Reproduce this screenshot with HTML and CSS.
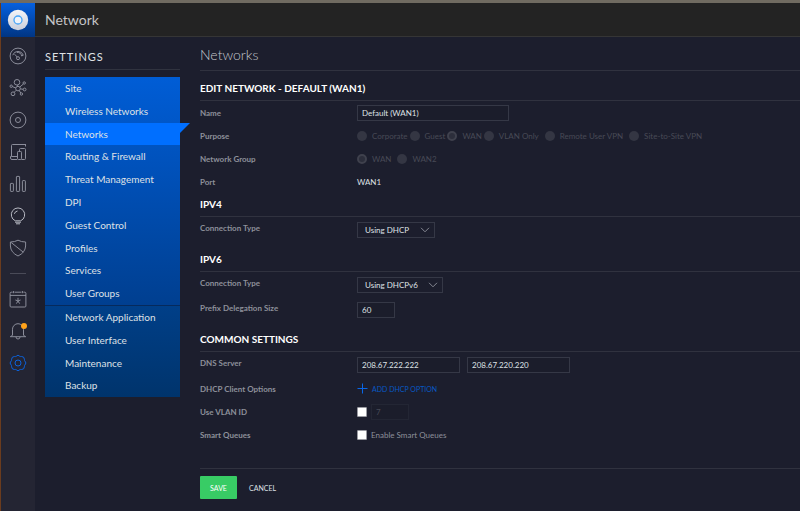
FILE: index.html
```html
<!DOCTYPE html>
<html lang="en">
<head>
<meta charset="utf-8">
<title>Network</title>
<link rel="stylesheet" href="styles.css">
</head>
<body>
<div class="app">
  <nav class="rail" aria-label="Main">
    <a class="logo" href="#" aria-label="Home">
      <svg width="22" height="22" viewBox="0 0 22 22"><defs><linearGradient id="disc" x1="0" y1="0" x2="0" y2="1"><stop offset="0" stop-color="#f4f5f8"/><stop offset="1" stop-color="#c9cedb"/></linearGradient></defs><circle cx="11" cy="11" r="10.2" fill="url(#disc)"/><circle cx="11" cy="11" r="4" fill="#eef3fb" stroke="#48a4f5" stroke-width="1.3"/></svg>
    </a>
    <div class="icons">
      <a href="#" aria-label="Dashboard"><svg viewBox="0 0 18 18"><circle cx="9" cy="9" r="7.9"/><path d="M3.7 8.2A5.6 5.6 0 0 1 14.3 8.2L12.6 9A4 4 0 0 0 8 5.4M5.6 7.2L8.2 10"/><circle cx="9" cy="11.2" r="1.5"/></svg></a>
      <a href="#" aria-label="Topology"><svg viewBox="0 0 18 18"><circle cx="9" cy="9.6" r="2.3"/><circle cx="8" cy="3.3" r="2.8"/><circle cx="4" cy="14.8" r="1.9"/><circle cx="2.2" cy="7.2" r="1.2"/><circle cx="15.2" cy="4" r="1.2"/><circle cx="15.6" cy="10.5" r="1.4"/><circle cx="12.4" cy="15" r="1.2"/><path d="M8.5 6.2L8.7 7.3M3.3 7.6L6.8 9M10.8 8L14.4 5M11.3 9.8L14.2 10.3M7.3 11.2L5.2 13.3M10.2 11.6L11.8 14"/></svg></a>
      <a href="#" aria-label="Devices"><svg viewBox="0 0 18 18"><circle cx="9" cy="9" r="7.9"/><circle cx="9" cy="9" r="2.5"/></svg></a>
      <a href="#" aria-label="Clients"><svg viewBox="0 0 18 18"><path d="M17 1.5H3.5a1 1 0 0 0-1 1V13.5H1.5v1.5a1.5 1.5 0 0 0 1.5 1.5H8M16.5 1.5V3.5M2.5 13.5H8"/><rect x="8.5" y="8.5" width="4" height="8" rx=".8"/><path d="M10.5 8.3V6.5a1 1 0 0 1 1-1h4a1 1 0 0 1 1 1v9a1 1 0 0 1-1 1H12.5"/></svg></a>
      <a href="#" aria-label="Statistics"><svg viewBox="0 0 18 18"><rect x="1.4" y="8.4" width="3" height="8" rx=".6"/><rect x="7.4" y="1.4" width="3.2" height="15" rx=".6"/><rect x="13.4" y="5.6" width="3" height="10.8" rx=".6"/></svg></a>
      <a class="bright" href="#" aria-label="Insights"><svg viewBox="0 0 18 18"><path d="M6.3 13.8A6.7 6.7 0 1 1 11.7 13.8Z"/><path d="M6 15.2H12M7 16.8H11M5.4 6.8A3.8 3.8 0 0 1 8.5 4"/></svg></a>
      <a href="#" aria-label="Security"><svg viewBox="0 0 18 18"><path d="M9 1.2Q5.8 3 1.4 3V7Q1.7 13.5 9 17Q16.3 13.5 16.6 7V3Q12.2 3 9 1.2ZM2.2 3.5L14.4 13.3"/></svg></a>
      <hr>
      <a href="#" aria-label="Events"><svg viewBox="0 0 18 18"><path d="M3.6 2.2H2.2a1.1 1.1 0 0 0-1.1 1.1V16a1 1 0 0 0 1 1h13.8a1 1 0 0 0 1-1V3.3a1.1 1.1 0 0 0-1.1-1.1h-1.4M5.6 2.2H12.4M1 5.4H17M4.6 1V3.2M13.4 1V3.2"/><path d="M9 7.8V10.7M6.4 10L9 10.9L11.6 10M7.4 13.6L9 11L10.6 13.6"/></svg></a>
      <a class="bell" href="#" aria-label="Alerts"><svg viewBox="0 0 18 18"><path d="M3.5 13V7.2A5.5 5.5 0 0 1 14.5 7.2V13Q14.8 14 16.7 14.7H1.3Q3.2 14 3.5 13ZM7 15A2 2 0 0 0 11 15"/></svg><span class="badge"></span></a>
      <a class="current" href="#" aria-label="Settings"><svg viewBox="0 0 18 18"><path d="M7.2 2.3Q9 0 10.8 2.3Q11.2 2.7 12.5 2.5Q15.2 2.4 15.4 5.2Q15.3 6.6 15.9 7Q18 9 15.9 11Q15.3 11.4 15.4 12.8Q15.2 15.6 12.5 15.5Q11.2 15.3 10.8 15.7Q9 18 7.2 15.7Q6.8 15.3 5.5 15.5Q2.8 15.6 2.6 12.8Q2.7 11.4 2.1 11Q0 9 2.1 7Q2.7 6.6 2.6 5.2Q2.8 2.4 5.5 2.5Q6.8 2.7 7.2 2.3Z"/><circle cx="9" cy="9" r="3"/></svg></a>
    </div>
  </nav>
  <div class="page">
    <header class="topbar">Network</header>
    <div class="columns">
      <aside class="settings">
        <h2>SETTINGS</h2>
        <ul class="menu">
          <li><a href="#">Site</a></li>
          <li><a href="#">Wireless Networks</a></li>
          <li class="active"><a href="#">Networks</a></li>
          <li><a href="#">Routing &amp; Firewall</a></li>
          <li><a href="#">Threat Management</a></li>
          <li><a href="#">DPI</a></li>
          <li><a href="#">Guest Control</a></li>
          <li><a href="#">Profiles</a></li>
          <li><a href="#">Services</a></li>
          <li><a href="#">User Groups</a></li>
        </ul>
        <ul class="menu lower">
          <li><a href="#">Network Application</a></li>
          <li><a href="#">User Interface</a></li>
          <li><a href="#">Maintenance</a></li>
          <li><a href="#">Backup</a></li>
        </ul>
      </aside>
      <main class="content">
        <h1>Networks</h1>
        <form>
          <section>
            <h3>EDIT NETWORK - DEFAULT (WAN1)</h3>
            <div class="row"><label for="name">Name</label><input class="text wide" id="name" type="text" value="Default (WAN1)"></div>
            <div class="row" role="radiogroup" aria-labelledby="purpose"><span class="label" id="purpose">Purpose</span>
              <div class="radios">
                <label><input type="radio" name="purpose" disabled>Corporate</label>
                <label><input type="radio" name="purpose" disabled>Guest</label>
                <label><input type="radio" name="purpose" disabled checked>WAN</label>
                <label class="roomy"><input type="radio" name="purpose" disabled>VLAN Only</label>
                <label class="roomy"><input type="radio" name="purpose" disabled>Remote User VPN</label>
                <label><input type="radio" name="purpose" disabled>Site-to-Site VPN</label>
              </div></div>
            <div class="row" role="radiogroup" aria-labelledby="group"><span class="label" id="group">Network Group</span>
              <div class="radios">
                <label class="roomy"><input type="radio" name="group" disabled checked>WAN</label>
                <label><input type="radio" name="group" disabled>WAN2</label>
              </div></div>
            <div class="row"><span class="label">Port</span><span class="value">WAN1</span></div>
          </section>
          <section>
            <h3>IPV4</h3>
            <div class="row tall"><label for="v4">Connection Type</label>
              <div class="pick short"><select id="v4"><option>Using DHCP</option></select><svg viewBox="0 0 10 6"><path d="M1 .8L5 4.8L9 .8"/></svg></div></div>
          </section>
          <section class="spaced">
            <h3>IPV6</h3>
            <div class="row tall"><label for="v6">Connection Type</label>
              <div class="pick"><select id="v6"><option>Using DHCPv6</option></select><svg viewBox="0 0 10 6"><path d="M1 .8L5 4.8L9 .8"/></svg></div></div>
            <div class="row tall"><label for="prefix">Prefix Delegation Size</label><input class="text small" id="prefix" type="text" value="60"></div>
          </section>
          <section class="spaced">
            <h3>COMMON SETTINGS</h3>
            <div class="row tall"><label for="dns1">DNS Server</label>
              <div class="pair"><input class="text" id="dns1" type="text" value="208.67.222.222"><input class="text" aria-label="Second DNS server" type="text" value="208.67.220.220"></div></div>
            <div class="row"><span class="label">DHCP Client Options</span>
              <button class="add" type="button"><svg viewBox="0 0 11 11"><path d="M5.5 .5V10.5M.5 5.5H10.5"/></svg>ADD DHCP OPTION</button></div>
            <div class="row"><label for="vlan">Use VLAN ID</label>
              <div class="check"><input id="vlan" type="checkbox"><input class="text small" aria-label="VLAN ID" type="text" value="7" disabled></div></div>
            <div class="row"><span class="label">Smart Queues</span>
              <label class="check"><input type="checkbox">Enable Smart Queues</label></div>
          </section>
          <footer class="actions"><button class="save" type="submit">SAVE</button><button class="cancel" type="button">CANCEL</button></footer>
        </form>
      </main>
    </div>
  </div>
</div>
</body>
</html>
```
FILE: styles.css
```css
* { box-sizing: border-box; }
body {
  margin: 0;
  min-height: 100vh;
  border-top: 3px solid #706b61;
  background: #1c1e2d;
  color: #dfe1e6;
  font: 8px/12px Lato, "Liberation Sans", sans-serif;
}
a { color: inherit; text-decoration: none; }
input, select, button { font: inherit; color: inherit; margin: 0; }
button { border: 0; background: none; padding: 0; }
h1, h2, h3, ul { margin: 0; padding: 0; }

.app {
  display: flex;
  min-height: calc(100vh - 3px);
  border-left: 1px solid #6b3c1e;
}

.rail { flex: none; width: 34px; background: #242533; }
.logo {
  display: grid;
  place-items: center;
  height: 34px;
  background: linear-gradient(#0560df, #003583);
}
.icons { display: grid; justify-items: center; padding-top: 10px; gap: 14px; }
.icons a { position: relative; height: 18px; color: #8b8d9a; }
.icons svg {
  display: block;
  width: 18px;
  height: 18px;
  fill: none;
  stroke: currentColor;
  stroke-linejoin: round;
}
.icons .bright { color: #b6b8c2; }
.icons .current { color: #0b62dc; }
.icons hr { width: 16px; height: 1px; margin: 2px 0; border: 0; background: #4a4b58; }
.badge {
  position: absolute;
  top: 1px;
  right: 0;
  width: 6px;
  height: 6px;
  border-radius: 50%;
  background: #ffa21a;
}

.page { flex: 1; min-width: 0; }
.topbar {
  height: 34px;
  padding-left: 10px;
  border-bottom: 1px solid #353535;
  background: #232323;
  color: #c3c4c6;
  font-size: 14px;
  line-height: 33px;
}
.columns { display: flex; gap: 20px; padding-left: 10px; }

.settings { flex: none; width: 135px; }
.settings h2 {
  margin-bottom: 7px;
  padding: 12px 0 5px;
  border-bottom: 1px solid #30333f;
  font-size: 11px;
  font-weight: 400;
  line-height: 15px;
  letter-spacing: 1px;
}
.menu {
  display: grid;
  grid-auto-rows: 23px 23px 22px 23px 23px;
  background: linear-gradient(#005dd6, #003f90);
  list-style: none;
  font-size: 10px;
  line-height: 22px;
}
.menu a { display: block; padding-left: 20px; }
.menu .active { position: relative; background: #006fff; }
.menu .active::after {
  content: "";
  position: absolute;
  top: 0;
  left: 100%;
  border-top: 10px solid #006fff;
  border-right: 10px solid transparent;
}
.lower { border-top: 1px solid #062a5c; background: linear-gradient(#003f88, #00346c); }

.content { flex: 1; min-width: 0; }
h1 {
  padding: 8px 0 6px;
  border-bottom: 1px solid #30323f;
  color: #c5c7cd;
  font-size: 14px;
  font-weight: 300;
  line-height: 19px;
}
h3 {
  padding: 5px 0;
  border-bottom: 1px solid #30323f;
  color: #fff;
  font-size: 10px;
  font-weight: 700;
  line-height: 13px;
}
form > section:first-child { padding-top: 6px; }
.row {
  display: grid;
  grid-template-columns: 157px 1fr;
  align-items: center;
  height: 23px;
}
.row.tall { height: 25px; }
.row > label:first-child, .label { color: #8d909a; font-weight: 700; }
.tall > label:first-child { padding-bottom: 3px; }
.text {
  width: 103px;
  height: 16px;
  padding: 0 4px;
  border: 1px solid #353846;
  background: #1b1d2b;
}
.text.wide { width: 152px; }
.text.small { width: 38px; }
.text:disabled { border-color: #232634; color: #484a56; }

.radios { display: flex; gap: 2px; color: #484a56; }
.radios label { display: flex; align-items: center; gap: 5px; }
.radios .roomy { margin-right: 4px; }
.radios input {
  appearance: none;
  width: 10px;
  height: 10px;
  border-radius: 50%;
  background: #343643;
}
.radios input:checked { border: 2px solid #3f414d; background: #2c2e3b; }

.spaced { padding-top: 6px; }
.pick { display: grid; width: 86px; align-items: center; }
.pick.short { width: 78px; }
.pick select, .pick svg { grid-area: 1 / 1; }
.pick select {
  appearance: none;
  height: 16px;
  padding: 0 7px;
  border: 1px solid #353846;
  border-radius: 0;
  background: transparent;
}
.pick svg {
  justify-self: end;
  width: 10px;
  margin-right: 5px;
  fill: none;
  stroke: #858792;
  pointer-events: none;
}
.pair { display: flex; gap: 7px; }
.add { display: flex; align-items: center; gap: 4px; color: #0858c4; font-size: 7px; }
.add svg { width: 11px; fill: none; stroke: #0866e8; }
.check { display: flex; align-items: center; gap: 4px; color: #8d909a; }
.check input[type="checkbox"] {
  appearance: none;
  width: 10px;
  height: 10px;
  border: 1px solid #9a9ba2;
  border-radius: 1px;
  background: #fff;
}

.actions {
  display: flex;
  gap: 12px;
  margin-top: 22px;
  padding-top: 7px;
  border-top: 1px solid #30323f;
  font-size: 7px;
}
.save { width: 37px; height: 23px; border-radius: 1px; background: #38cc65; color: #fff; }
```
